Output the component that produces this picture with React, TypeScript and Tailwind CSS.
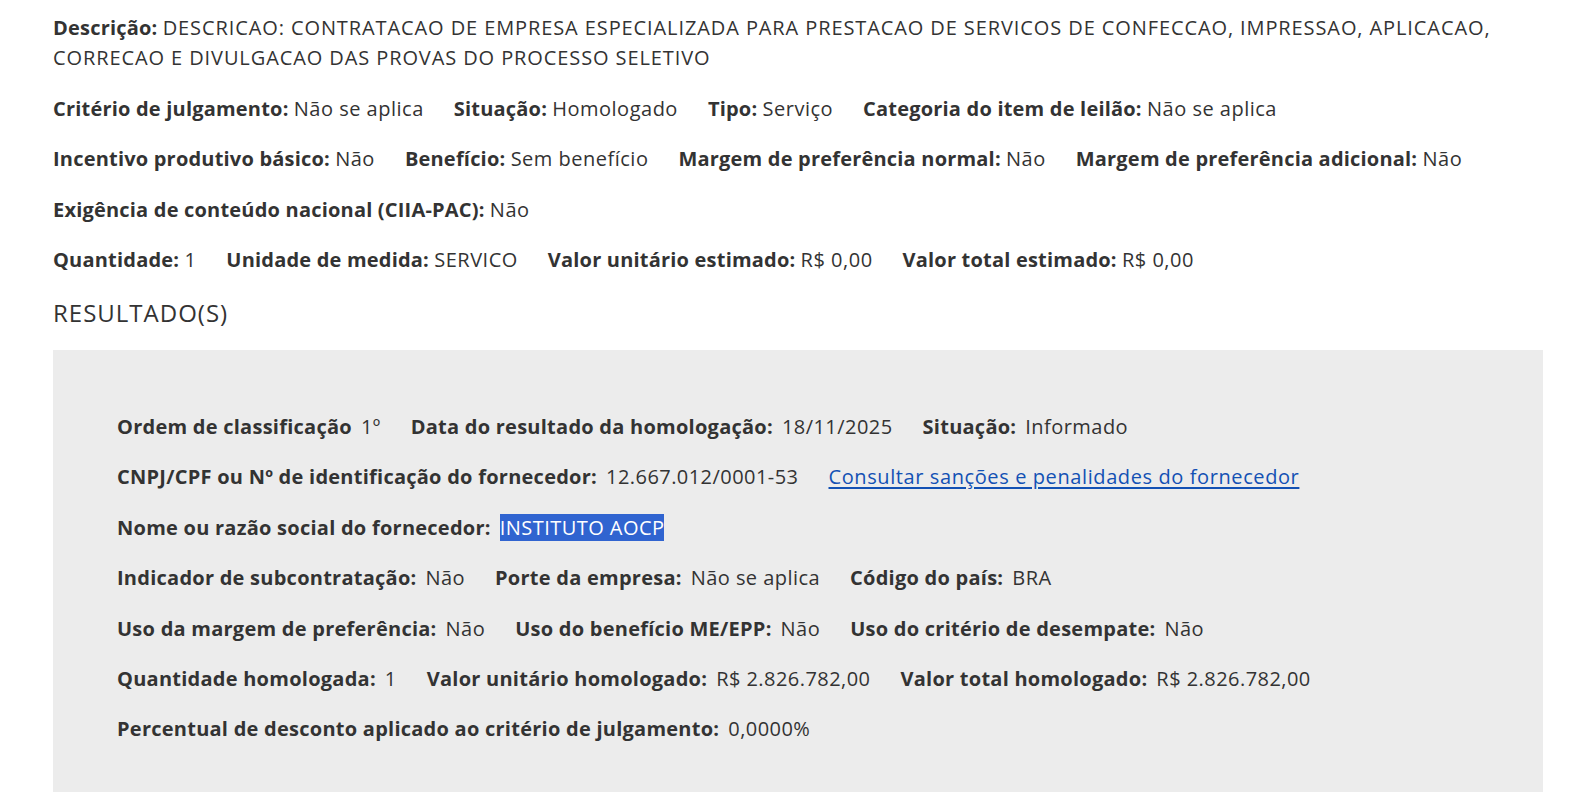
import React from 'react';

type Field = { label: string; value: React.ReactNode };

const topRows: Field[][] = [
  [
    { label: 'Critério de julgamento:', value: 'Não se aplica' },
    { label: 'Situação:', value: 'Homologado' },
    { label: 'Tipo:', value: 'Serviço' },
    { label: 'Categoria do item de leilão:', value: 'Não se aplica' },
  ],
  [
    { label: 'Incentivo produtivo básico:', value: 'Não' },
    { label: 'Benefício:', value: 'Sem benefício' },
    { label: 'Margem de preferência normal:', value: 'Não' },
    { label: 'Margem de preferência adicional:', value: 'Não' },
  ],
  [{ label: 'Exigência de conteúdo nacional (CIIA-PAC):', value: 'Não' }],
  [
    { label: 'Quantidade:', value: '1' },
    { label: 'Unidade de medida:', value: 'SERVICO' },
    { label: 'Valor unitário estimado:', value: 'R$ 0,00' },
    { label: 'Valor total estimado:', value: 'R$ 0,00' },
  ],
];

const resultRows: Field[][] = [
  [
    { label: 'Ordem de classificação', value: '1º' },
    { label: 'Data do resultado da homologação:', value: '18/11/2025' },
    { label: 'Situação:', value: 'Informado' },
  ],
  [
    { label: 'CNPJ/CPF ou Nº de identificação do fornecedor:', value: '12.667.012/0001-53' },
    {
      label: '',
      value: (
        <a href="#" className="text-[#1351b4] underline underline-offset-[3px] tracking-[0.6px]">
          Consultar sanções e penalidades do fornecedor
        </a>
      ),
    },
  ],
  [
    {
      label: 'Nome ou razão social do fornecedor:',
      value: <span className="bg-[#3064d0] text-white">INSTITUTO AOCP</span>,
    },
  ],
  [
    { label: 'Indicador de subcontratação:', value: 'Não' },
    { label: 'Porte da empresa:', value: 'Não se aplica' },
    { label: 'Código do país:', value: 'BRA' },
  ],
  [
    { label: 'Uso da margem de preferência:', value: 'Não' },
    { label: 'Uso do benefício ME/EPP:', value: 'Não' },
    { label: 'Uso do critério de desempate:', value: 'Não' },
  ],
  [
    { label: 'Quantidade homologada:', value: '1' },
    { label: 'Valor unitário homologado:', value: 'R$ 2.826.782,00' },
    { label: 'Valor total homologado:', value: 'R$ 2.826.782,00' },
  ],
  [{ label: 'Percentual de desconto aplicado ao critério de julgamento:', value: '0,0000%' }],
];

export default function App() {
  return (
    <div className="min-h-screen bg-white text-[#333333] font-['Open_Sans','Liberation_Sans',sans-serif] text-[20px] pl-[53px] pr-[38px] pt-[13px]">
      <p className="leading-[30px]">
        <span className="font-bold tracking-[0.2px]">Descrição:</span>{' '}
        <span className="tracking-[0.9px]">
          DESCRICAO: CONTRATACAO DE EMPRESA ESPECIALIZADA PARA PRESTACAO DE SERVICOS DE CONFECCAO, IMPRESSAO,
          APLICACAO, CORRECAO E DIVULGACAO DAS PROVAS DO PROCESSO SELETIVO
        </span>
      </p>

      {topRows.map((row, i) => (
        <div key={i} className="flex flex-wrap gap-x-[30px] leading-[30px] mt-[20.5px]">
          {row.map(f => (
            <div key={f.label}>
              <span className="font-bold tracking-[0.2px]">{f.label}</span>{' '}
              <span className="tracking-[0.5px]">{f.value}</span>
            </div>
          ))}
        </div>
      ))}

      <h3 className="text-[24px] tracking-[1px] leading-[30px] mt-[23px]">RESULTADO(S)</h3>

      <div className="bg-[#ececec] mt-[22px] pl-[64px] pt-[62px] pb-[40px]">
        {resultRows.map((row, i) => (
          <div key={i} className="flex flex-wrap gap-x-[30px] leading-[30px] mb-[20.4px]">
            {row.map((f, j) => (
              <div key={j} className="flex gap-x-[9px]">
                {f.label && <span className="font-bold tracking-[0.25px]">{f.label}</span>}
                <span className="tracking-[0.45px]">{f.value}</span>
              </div>
            ))}
          </div>
        ))}
      </div>
    </div>
  );
}
